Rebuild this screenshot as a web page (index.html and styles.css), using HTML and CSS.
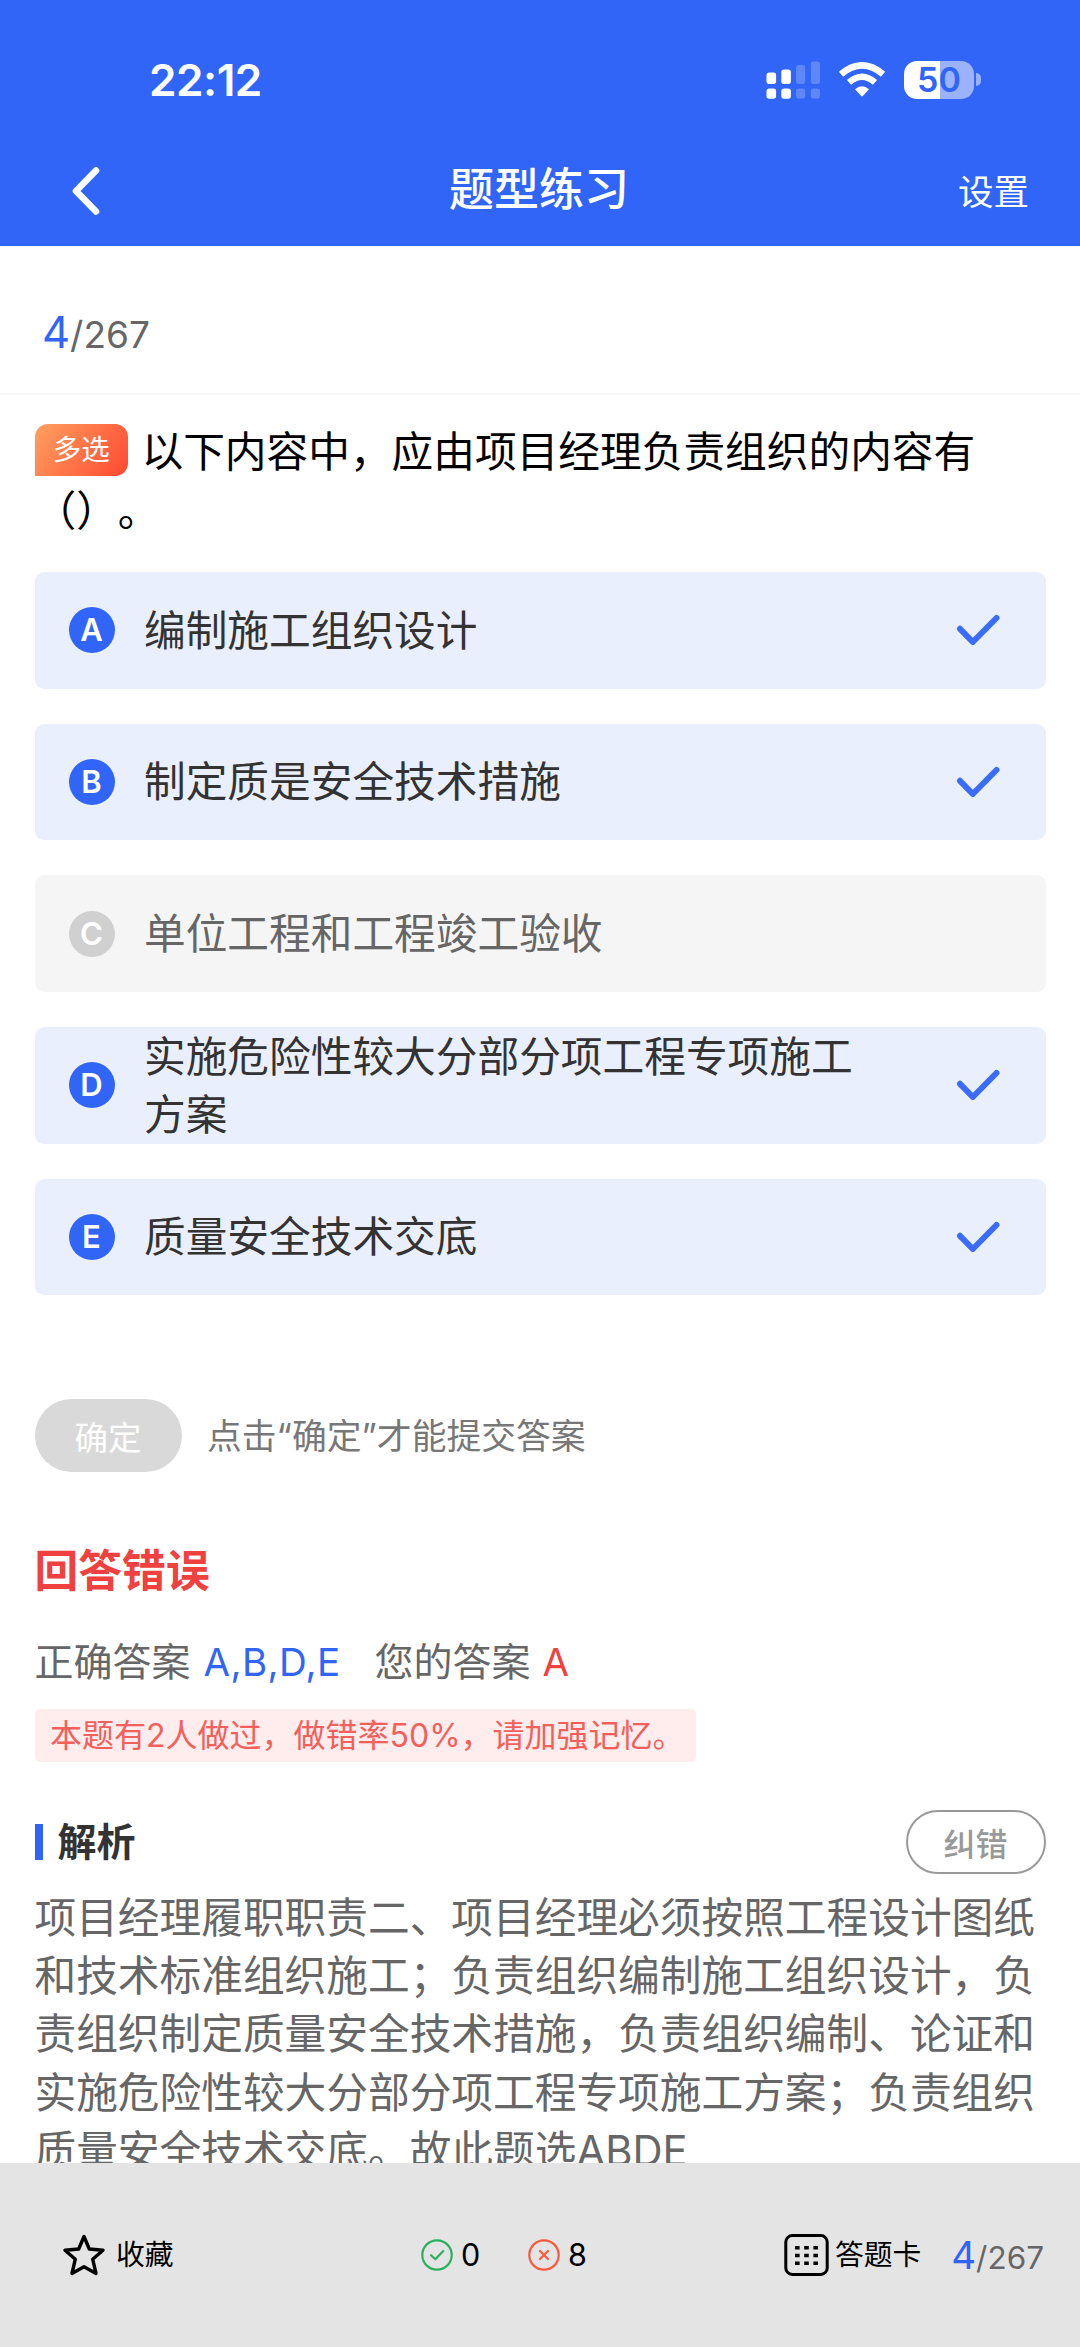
FILE: index.html
```html
<!DOCTYPE html>
<html lang="zh-CN">
<head>
<meta charset="utf-8">
<title>题型练习</title>
<link rel="stylesheet" href="styles.css">
</head>
<body>
<svg class="sprite" width="0" height="0">
  <symbol id="check" viewBox="0 0 44 32"><path d="M4 14.8 16.8 28 40.5 4" fill="none" stroke="currentColor" stroke-width="6" stroke-linecap="round" stroke-linejoin="round"/></symbol>
</svg>
<header class="header">
  <div class="status">
    <span class="time">22:12</span>
    <span class="status-icons">
      <svg class="signal" width="55" height="38" viewBox="0 0 55 38" fill="#fff">
        <rect x="0.5" y="11.5" width="9.6" height="11.5" rx="2.8"/><rect x="0.5" y="27.5" width="9.6" height="10.3" rx="2.8"/>
        <rect x="15.3" y="8.5" width="9.6" height="14.5" rx="2.8"/><rect x="15.3" y="27.5" width="9.6" height="10.3" rx="2.8"/>
        <g opacity=".22"><rect x="30" y="4" width="9.2" height="19" rx="2.8"/><rect x="30" y="27.5" width="9.2" height="10" rx="2.8"/><rect x="44.8" y="0.5" width="9.2" height="22.5" rx="2.8"/><rect x="44.8" y="27.5" width="9.2" height="10" rx="2.8"/></g>
      </svg>
      <svg class="wifi" width="48" height="36" viewBox="0 0 48 36" fill="none" stroke="#fff">
        <path d="M3 12.2Q24-5.4 45 12.2" stroke-width="6.6"/>
        <path d="M11 20.4Q24 9.2 37 20.4" stroke-width="6.4"/>
        <path d="M17 27.2Q24 21.4 31 27.2L24.8 34Q24 34.8 23.2 34Z" fill="#fff" stroke="none"/>
      </svg>
      <span class="battery"><span class="battery-body">50</span><span class="battery-cap"></span></span>
    </span>
  </div>
  <nav class="nav">
    <svg class="back" width="30" height="50" viewBox="0 0 30 50"><path d="M26 4.500 6 25 26 45.500" fill="none" stroke="#fff" stroke-width="6.600" stroke-linecap="round" stroke-linejoin="round"/></svg>
    <h1 class="title">题型练习</h1>
    <span class="settings">设置</span>
  </nav>
</header>
<main class="content">
  <div class="progress"><b class="current">4</b><span class="total">/267</span></div>
  <section class="quiz">
    <p class="question"><span class="tag">多选</span>以下内容中，应由项目经理负责组织的内容有（）。</p>
    <ul class="options">
      <li class="option"><span class="letter">A</span><span class="label">编制施工组织设计</span><svg class="tick"><use href="#check"/></svg></li>
      <li class="option"><span class="letter">B</span><span class="label">制定质是安全技术措施</span><svg class="tick"><use href="#check"/></svg></li>
      <li class="option off"><span class="letter">C</span><span class="label">单位工程和工程竣工验收</span></li>
      <li class="option"><span class="letter">D</span><span class="label">实施危险性较大分部分项工程专项施工方案</span><svg class="tick"><use href="#check"/></svg></li>
      <li class="option"><span class="letter">E</span><span class="label">质量安全技术交底</span><svg class="tick"><use href="#check"/></svg></li>
    </ul>
    <div class="submit"><button class="confirm">确定</button><span class="hint">点击“确定”才能提交答案</span></div>
    <h2 class="result">回答错误</h2>
    <div class="answers"><span>正确答案</span><span class="right">A,B,D,E</span><span class="yours">您的答案</span><span class="wrong">A</span></div>
    <div class="notice">本题有2人做过，做错率50%，请加强记忆。</div>
    <div class="analysis-head"><h3 class="analysis-title">解析</h3><button class="report">纠错</button></div>
    <p class="analysis">项目经理履职职责二、项目经理必须按照工程设计图纸和技术标准组织施工；负责组织编制施工组织设计，负责组织制定质量安全技术措施，负责组织编制、论证和实施危险性较大分部分项工程专项施工方案；负责组织质量安全技术交底。故此题选ABDE</p>
  </section>
</main>
<footer class="footer">
  <span class="fav"><svg width="44" height="44" viewBox="0 0 44 44"><path d="M22 3.500 27.300 16 41 17.200 30.700 26.200 34 40.500 22 33.800 10 40.500 13.300 26.200 3 17.200 16.700 16Z" fill="none" stroke="#000" stroke-width="3.400" stroke-linejoin="round"/></svg>收藏</span>
  <span class="count ok"><svg width="32" height="32" viewBox="0 0 32 32" fill="none" stroke="#2bb05f" stroke-width="2.200" stroke-linecap="round" stroke-linejoin="round"><circle cx="16" cy="16" r="14.700"/><path d="M10 16.200 14.300 20.300 22.300 12"/></svg>0</span>
  <span class="count bad"><svg width="32" height="32" viewBox="0 0 32 32" fill="none" stroke="#fa5a3c" stroke-width="2.200" stroke-linecap="round"><circle cx="16" cy="16" r="14.700"/><path d="M12 12 20 20M20 12 12 20"/></svg>8</span>
  <span class="card"><svg width="45" height="42" viewBox="0 0 45 42"><rect x="1.800" y="1.600" width="41.400" height="38.800" rx="6.500" fill="none" stroke="#000" stroke-width="3"/><path d="M11 13.800h4.600M20.200 13.800h4.600M29.400 13.800h4.600M11 21.500h4.600M20.200 21.500h4.600M29.400 21.500h4.600M11 29.200h4.600M20.200 29.200h4.600M29.400 29.200h4.600" stroke="#000" stroke-width="3.600"/></svg>答题卡</span>
  <span class="page"><b class="current">4</b><span class="total">/267</span></span>
</footer>
</body>
</html>
```
FILE: styles.css
```css
* { box-sizing: border-box; margin: 0; padding: 0; }
body {
  width: 1080px; height: 2347px; overflow: hidden;
  display: flex; flex-direction: column;
  background: #fff; color: #000;
  font-family: Inter, "Noto Sans CJK SC", sans-serif;
  font-size: 41.7px;
  text-spacing-trim: space-all;
}
button { border: 0; font-family: inherit; }
b { font-weight: 400; }
.sprite { position: absolute; }

.header { flex: none; height: 246px; background: #3165f8; color: #fff; }
.status { height: 117px; padding: 42px 99px 0 149px; display: flex; justify-content: space-between; align-items: center; }
.time { font-size: 44.2px; font-weight: 600; line-height: 74px; letter-spacing: -0.5px; }
.status-icons { display: flex; align-items: center; }
.wifi { margin-left: 17px; }
.battery { display: flex; align-items: center; gap: 2px; margin-left: 18px; }
.battery-body {
  width: 70px; height: 38px; border-radius: 13px; text-align: center;
  background: linear-gradient(90deg, #fff 51%, #9bb3fc 51%);
  color: #3165f8; font-size: 34px; font-weight: 600; line-height: 38px;
}
.battery-cap { width: 5px; height: 13px; border-radius: 0 7px 7px 0; background: #9bb3fc; }
.nav { height: 129px; padding: 21px 51px 0 70px; display: grid; grid-template-columns: 379px auto 1fr; align-items: start; }
.title { font-size: 45px; font-weight: 500; line-height: 60px; padding-top: 22px; }
.back { margin-top: 28px; }
.settings { justify-self: end; font-size: 35.5px; line-height: 50px; padding-top: 30px; }

.content { flex: 1; overflow: hidden; }
.progress { height: 149px; padding: 60px 0 0 42px; line-height: 52px; border-bottom: 2px solid #f7f7f7; white-space: nowrap; }
.progress .current { font-size: 43.5px; }
.current { color: #3165f8; }
.total { color: #666; font-size: 37px; }

.quiz { padding: 28px 34.5px 0; }
.question { line-height: 58.1px; height: 116px; }
.tag {
  display: inline-block; width: 93.5px; height: 52px; line-height: 52px; margin: -6px 13.5px 6px 0;
  text-align: center; color: #fff; font-size: 28.5px;
  background: linear-gradient(125deg, #ffa060, #ff4931);
  border-radius: 13px 13px 13px 0; vertical-align: middle;
}
.options { list-style: none; margin-top: 33px; display: flex; flex-direction: column; gap: 35.2px; }
.option { height: 116.5px; padding: 0 46px 0 34px; border-radius: 9px; background: #eaeffe; color: #333; display: flex; align-items: center; }
.letter { width: 46px; height: 46px; border-radius: 50%; background: #3165f8; color: #fff; font-size: 31px; font-weight: 600; line-height: 46px; text-align: center; }
.label { width: 730px; margin-left: 29.5px; padding-top: 1px; line-height: 58.1px; }
.tick { width: 44px; height: 32px; margin-left: auto; color: #3b6cf6; }
.off { background: #f5f5f5; color: #666; }
.off .letter { background: #d0d0d0; }

.submit { margin-top: 103.5px; display: flex; align-items: center; gap: 25.5px; }
.confirm { width: 147px; height: 73px; border-radius: 36.5px; background: #d9d9d9; color: #fff; font-size: 33.5px; }
.hint { color: #777; font-size: 34.8px; line-height: 50px; padding-top: 1px; }
.result { margin-top: 68px; font-size: 43.8px; line-height: 64px; font-weight: 700; color: #ee4140; }
.answers { margin-top: 29px; height: 58px; display: flex; align-items: center; font-size: 39px; line-height: 58px; color: #666; }
.right { margin-left: 13px; color: #3165f8; font-size: 38.5px; letter-spacing: 0.4px; }
.yours { margin-left: 34px; }
.wrong { margin-left: 12px; color: #ee4140; font-size: 38.5px; }
.notice { display: inline-block; margin-top: 18px; height: 53px; line-height: 53px; width: 661px; padding-left: 15.5px; white-space: nowrap; border-radius: 5px; background: #ffecec; color: #f2605c; font-size: 32px; vertical-align: top; }
.analysis-head { margin-top: 48px; height: 64px; display: flex; justify-content: space-between; align-items: center; }
.analysis-title { border-left: 8px solid #3165f8; padding-left: 15px; font-size: 39px; line-height: 36px; color: #333; }
.report { width: 140px; height: 64px; border: 2px solid #999; border-radius: 32px; background: #fff; color: #999; font-size: 32px; font-weight: 500; }
.analysis { margin-top: 15.5px; line-height: 58.1px; color: #666; width: 1006px; }

.footer { flex: none; height: 184px; padding: 63px 36px 0 62px; background: #e4e4e4; display: flex; align-items: flex-start; font-size: 28.8px; line-height: 58px; }
.footer > span { display: flex; align-items: center; height: 58px; }
.fav { width: 359px; gap: 10px; }
.count { gap: 8px; width: 107px; font-size: 30.5px; }
.bad { width: 256px; }
.card { gap: 6px; flex: 1; }
.footer > .page { align-items: baseline; line-height: 58px; }
.page .current { font-size: 38.5px; }
.page .total { font-size: 31.5px; }
```
